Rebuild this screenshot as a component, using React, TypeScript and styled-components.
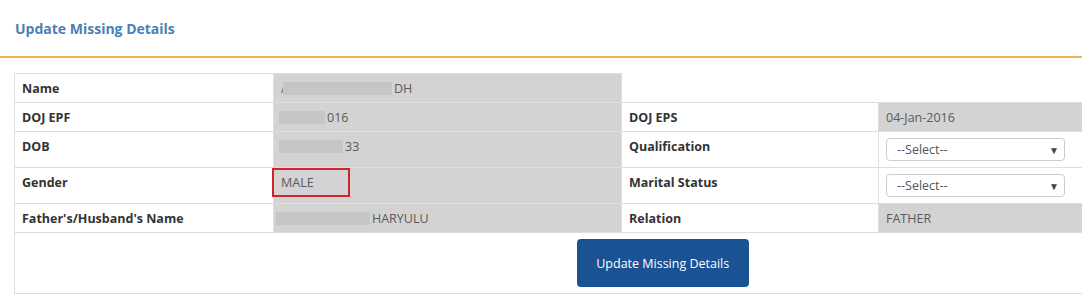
import React from "react";
import styled, { createGlobalStyle } from "styled-components";

const GlobalStyle = createGlobalStyle`
  html, body {
    margin: 0;
    padding: 0;
    background: #ffffff;
    overflow: hidden;
    font-family: "Open Sans", "Noto Sans", sans-serif;
  }
`;

const Page = styled.div`
  width: 1082px;
  height: 295px;
  overflow: hidden;
`;

const PanelHeader = styled.div`
  height: 58px;
  border-bottom: 2px solid #f0b05a;
  display: flex;
  align-items: center;
  padding: 0 14px;
  box-sizing: border-box;
`;

const Title = styled.h3`
  margin: 0 0 0 1px;
  font-size: 14px;
  font-weight: 700;
  color: #4a80b6;
`;

const Body = styled.div`
  padding: 15px 0 0 14px;
`;

const Table = styled.table`
  width: 1296px;
  table-layout: fixed;
  border-collapse: collapse;
  font-size: 13px;
  line-height: 14px;
`;

const Cell = styled.td<{ $kind: "label" | "value" }>`
  border: 1px solid #dedede;
  padding: 8px 7px 6px;
  vertical-align: top;
  position: relative;
  white-space: nowrap;
  background: ${({ $kind }) => ($kind === "value" ? "#d3d3d3" : "#ffffff")};
  color: ${({ $kind }) => ($kind === "label" ? "#333333" : "#5a5a5a")};
  font-weight: ${({ $kind }) => ($kind === "label" ? 700 : 400)};
  font-size: 12.5px;
`;

const SelectCell = styled.td`
  border: 1px solid #dedede;
  padding: 6px 18px 6px 7px;
  vertical-align: top;
  background: #ffffff;
`;

const ButtonCell = styled.td`
  border: 1px solid #dedede;
  border-right: none;
  padding: 6px 0;
  text-align: center;
  height: 48px;
`;

const Redacted = styled.span<{ $w: number; $ml?: number }>`
  display: inline-block;
  width: ${({ $w }) => $w}px;
  height: 13px;
  margin-left: ${({ $ml }) => $ml ?? 0}px;
  margin-right: 2px;
  vertical-align: -2px;
  background: #c6c6c6;
`;

const Highlight = styled.span`
  position: absolute;
  left: -2px;
  top: 0;
  width: 78px;
  height: 29px;
  border: 2px solid #d4222c;
  box-sizing: border-box;
`;

const SelectWrap = styled.div`
  position: relative;
  width: 179px;
`;

const Select = styled.select`
  appearance: none;
  width: 100%;
  height: 23px;
  border: 1px solid #cccccc;
  border-radius: 4px;
  background: #ffffff;
  padding: 0 10px;
  font-family: "Open Sans", "Noto Sans", sans-serif;
  font-size: 12.5px;
  color: #555555;
`;

const Arrow = styled.span`
  position: absolute;
  right: 6px;
  top: 5px;
  font-size: 10px;
  color: #444444;
  pointer-events: none;
`;

const SubmitButton = styled.button`
  width: 172px;
  height: 48px;
  border: none;
  border-radius: 4px;
  background: #1a5294;
  color: #ffffff;
  font-family: "Open Sans", "Noto Sans", sans-serif;
  font-size: 12.5px;
  cursor: pointer;
`;

const Dropdown: React.FC = () => (
  <SelectWrap>
    <Select defaultValue="">
      <option value="">--Select--</option>
    </Select>
    <Arrow>▼</Arrow>
  </SelectWrap>
);

export default function App() {
  return (
    <Page>
      <GlobalStyle />
      <PanelHeader>
        <Title>Update Missing Details</Title>
      </PanelHeader>
      <Body>
        <Table>
          <colgroup>
            <col style={{ width: 259 }} />
            <col style={{ width: 348 }} />
            <col style={{ width: 257 }} />
            <col style={{ width: 432 }} />
          </colgroup>
          <tbody>
            <tr>
              <Cell $kind="label">Name</Cell>
              <Cell $kind="value">
                A<Redacted $w={109} $ml={-6} />DH
              </Cell>
            </tr>
            <tr>
              <Cell $kind="label">DOJ EPF</Cell>
              <Cell $kind="value">
                <Redacted $w={46} $ml={-2} />016
              </Cell>
              <Cell $kind="label">DOJ EPS</Cell>
              <Cell $kind="value">04-Jan-2016</Cell>
            </tr>
            <tr>
              <Cell $kind="label">DOB</Cell>
              <Cell $kind="value">
                <Redacted $w={64} $ml={-2} />33
              </Cell>
              <Cell $kind="label">Qualification</Cell>
              <SelectCell>
                <Dropdown />
              </SelectCell>
            </tr>
            <tr>
              <Cell $kind="label">Gender</Cell>
              <Cell $kind="value">
                MALE
                <Highlight />
              </Cell>
              <Cell $kind="label">Marital Status</Cell>
              <SelectCell>
                <Dropdown />
              </SelectCell>
            </tr>
            <tr>
              <Cell $kind="label">Father's/Husband's Name</Cell>
              <Cell $kind="value">
                <Redacted $w={94} $ml={-5} />HARYULU
              </Cell>
              <Cell $kind="label">Relation</Cell>
              <Cell $kind="value">FATHER</Cell>
            </tr>
            <tr>
              <ButtonCell colSpan={4}>
                <SubmitButton>Update Missing Details</SubmitButton>
              </ButtonCell>
            </tr>
          </tbody>
        </Table>
      </Body>
    </Page>
  );
}
